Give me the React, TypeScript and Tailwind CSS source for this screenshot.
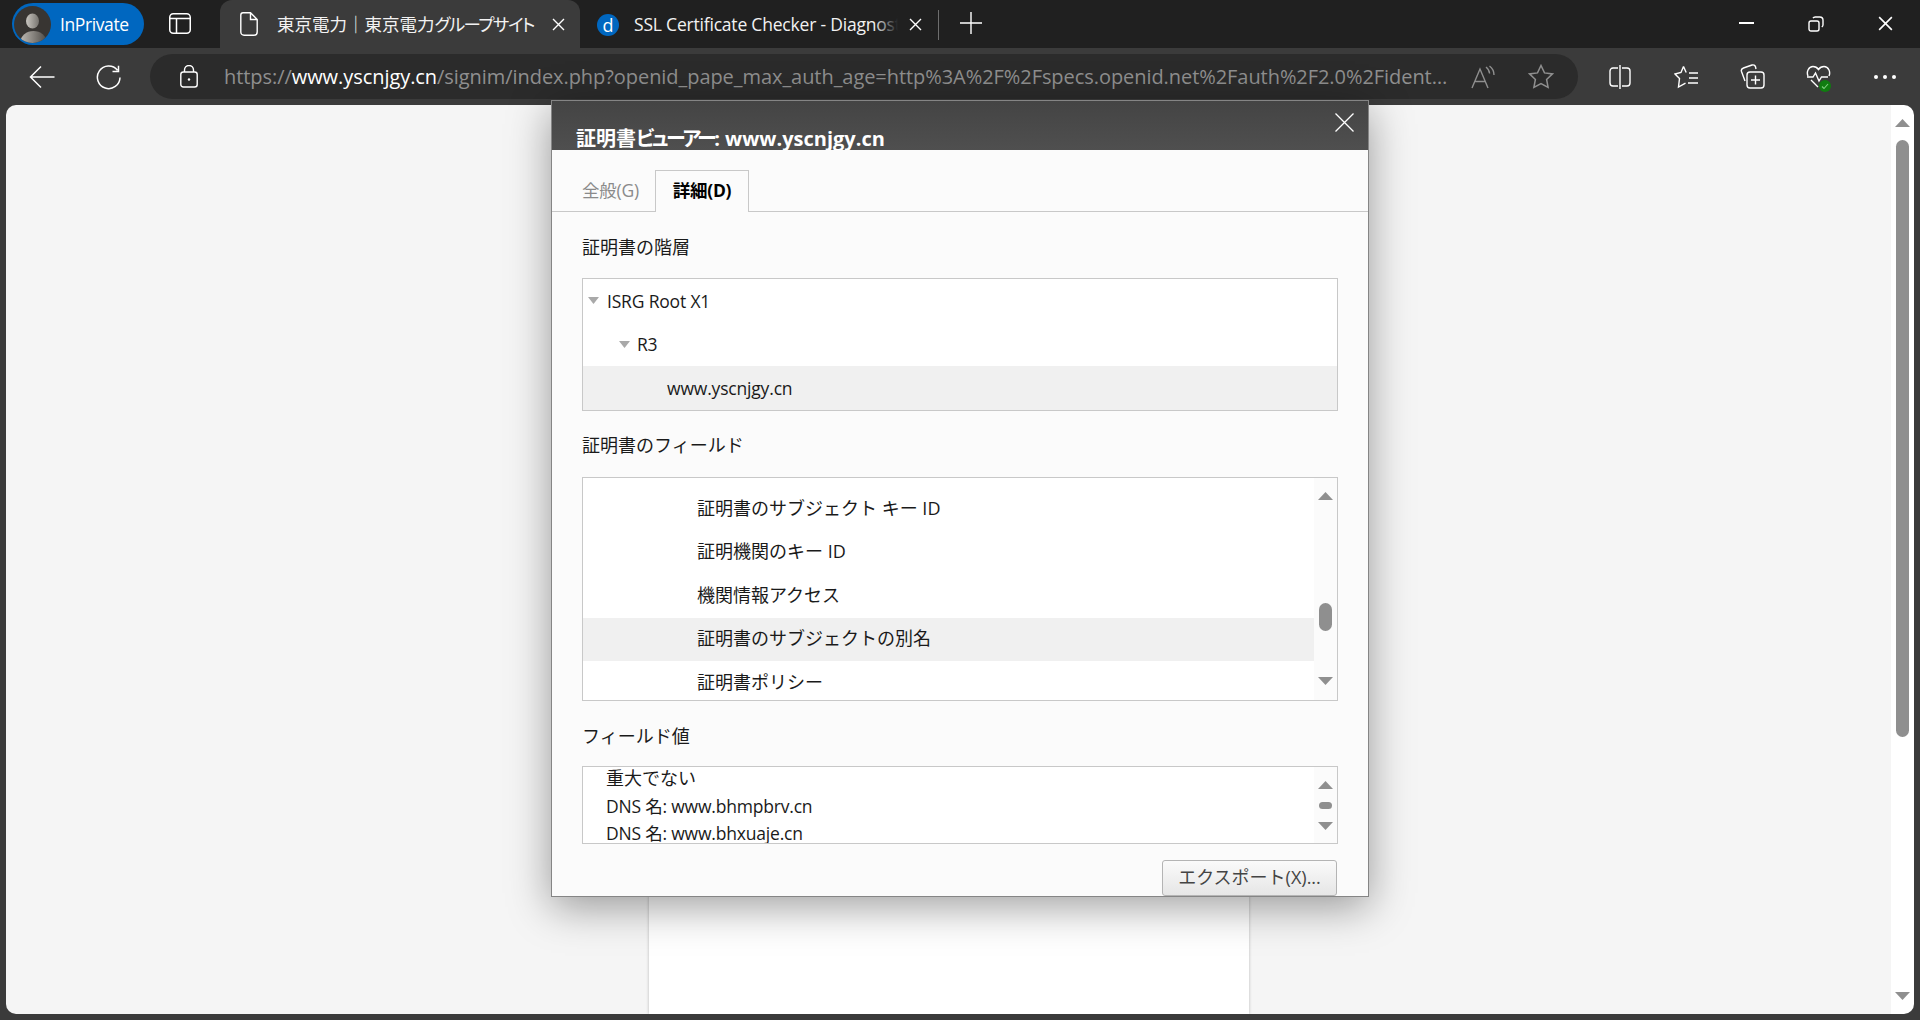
import React from "react";

const stroke = "currentColor";

function Tri({ down = false, className = "" }: { down?: boolean; className?: string }) {
  return (
    <svg width="15" height="8" viewBox="0 0 15 8" className={className}>
      <polygon points={down ? "0,0 15,0 7.5,8" : "0,8 15,8 7.5,0"} fill="#8f8f8f" />
    </svg>
  );
}

function TreeArrow() {
  return (
    <svg width="11" height="7" viewBox="0 0 11 7" className="shrink-0">
      <polygon points="0,0 11,0 5.5,7" fill="#a9a9a9" />
    </svg>
  );
}

function Avatar() {
  return (
    <svg width="37" height="37" viewBox="0 0 37 37" className="shrink-0">
      <defs>
        <linearGradient id="avh" x1="0" y1="0" x2="1" y2="0">
          <stop offset="0" stopColor="#c9c6c0" />
          <stop offset="1" stopColor="#77746f" />
        </linearGradient>
        <linearGradient id="avs" x1="0" y1="0" x2="1" y2="0">
          <stop offset="0" stopColor="#bdb9b2" />
          <stop offset="1" stopColor="#4f4c48" />
        </linearGradient>
        <clipPath id="avc">
          <circle cx="18.5" cy="18.5" r="18.5" />
        </clipPath>
      </defs>
      <g clipPath="url(#avc)">
        <rect width="37" height="37" fill="#383532" />
        <ellipse cx="18.500" cy="15" rx="6.500" ry="7.500" fill="url(#avh)" />
        <ellipse cx="19.500" cy="36" rx="13" ry="11" fill="url(#avs)" />
      </g>
    </svg>
  );
}

function SmallX({ size = 13 }: { size?: number }) {
  return (
    <svg width={size} height={size} viewBox="0 0 13 13" fill="none" stroke={stroke} strokeWidth="1.4">
      <path d="M1 1l11 11M12 1L1 12" />
    </svg>
  );
}

function Scrollbar({ children }: { children: React.ReactNode }) {
  return <div className="w-[23px] shrink-0 bg-[#fbfbfb] flex flex-col items-center">{children}</div>;
}

function TabBar() {
  return (
    <div className="h-[48px] bg-[#202020] flex text-white shrink-0">
      <div className="ml-[12px] mt-[3px] w-[132px] h-[42px] rounded-full bg-[#0067c0] flex items-center pl-[2px]">
        <Avatar />
        <span className="ml-[9px] text-[17.5px] font-['Open_Sans',sans-serif] tracking-[-0.4px]">InPrivate</span>
      </div>
      <div className="ml-[25px] mt-[13px] w-[22px] h-[21px] shrink-0">
        <svg width="22" height="21" viewBox="0 0 22 21" fill="none" stroke="#fff" strokeWidth="1.5">
          <rect x="0.75" y="0.75" width="20.5" height="19.5" rx="3.5" />
          <path d="M7.5 5v15.5M1 5.5h20" />
        </svg>
      </div>
      <div className="ml-[29px] w-[360px] h-[48px] bg-[#3b3b3b] rounded-t-[12px] flex items-center shrink-0">
        <svg width="18" height="24" viewBox="0 0 18 24" fill="none" stroke="#fff" strokeWidth="1.4" className="ml-[20px] shrink-0">
          <path d="M3 .8h7.5l6.7 6.7V20a3.2 3.2 0 0 1-3.2 3.2H4A3.2 3.2 0 0 1 .8 20V3A2.2 2.2 0 0 1 3 .8zM10.5 1v6.5h6.5" />
        </svg>
        <span className="ml-[19px] w-[244px] shrink-0 text-[17.5px] whitespace-nowrap font-['Noto_Sans_CJK_JP',sans-serif] [font-feature-settings:'palt'] text-[#f2f2f2]">
          東京電力｜東京電力<span className="tracking-[-1.5px]">グループサイト</span>
        </span>
        <span className="ml-[31px]"><SmallX /></span>
      </div>
      <div className="ml-[17px] mt-[14px] w-[22px] h-[22px] rounded-full bg-[#0067c0] flex items-center justify-center text-[18px] leading-[22px] font-['Open_Sans',sans-serif] shrink-0">
        d
      </div>
      <div className="ml-[15px] w-[264px] h-[48px] flex items-center overflow-hidden relative shrink-0">
        <span className="text-[17.5px] whitespace-nowrap text-[#f2f2f2] font-['Open_Sans',sans-serif] tracking-[-0.2px]">
          SSL Certificate Checker - Diagnostics
        </span>
        <div className="absolute right-0 top-0 h-full w-[24px] bg-gradient-to-r from-transparent to-[#202020]" />
      </div>
      <span className="ml-[11px] mt-[18px]"><SmallX /></span>
      <div className="ml-[16px] mt-[10px] w-px h-[30px] bg-[#6e6e6e]" />
      <svg width="22" height="22" viewBox="0 0 22 22" stroke="#fff" strokeWidth="1.4" className="ml-[21px] mt-[12px]">
        <path d="M11 0v22M0 11h22" />
      </svg>
      <div className="flex-1" />
      <svg width="15" height="2" viewBox="0 0 15 2" className="mt-[22px] mr-[54px]">
        <rect width="15" height="2" fill="#fff" />
      </svg>
      <svg width="16" height="16" viewBox="0 0 16 16" fill="none" stroke="#fff" strokeWidth="1.4" className="mt-[16px] mr-[54px]">
        <rect x="1" y="5" width="10" height="10" rx="2" />
        <path d="M5 2.2C5.5 1.3 6.3 1 7.2 1h4.6C13.6 1 15 2.4 15 4.2v4.6c0 .9-.4 1.7-1.2 2.2" />
      </svg>
      <span className="mt-[16px] mr-[27px]"><SmallX size={15} /></span>
    </div>
  );
}

function ToolBar() {
  return (
    <div className="h-[57px] bg-[#3b3b3b] flex items-start text-white shrink-0">
      <svg width="26" height="24" viewBox="0 0 26 24" fill="none" stroke="#fff" strokeWidth="1.5" className="ml-[29px] mt-[17px]">
        <path d="M1.5 12h24M12 1.5L1.5 12 12 22.5" />
      </svg>
      <svg width="26" height="25" viewBox="0 0 26 25" fill="none" stroke="#fff" strokeWidth="1.5" className="ml-[41px] mt-[17px]">
        <path d="M21.5 5.2A11.3 11.3 0 1 0 24 12.5M22.5 0.8v5.7h-6" />
      </svg>
      <div className="ml-[28px] mt-[6px] w-[1428px] h-[45px] rounded-full bg-[#2b2b2b] flex items-center">
        <svg width="18" height="23" viewBox="0 0 18 23" fill="none" stroke="#fff" strokeWidth="1.4" className="ml-[30px] shrink-0">
          <rect x="0.8" y="7" width="16.4" height="15" rx="2.5" />
          <path d="M4.5 7V5a4.5 4.5 0 0 1 9 0v2" />
          <circle cx="9" cy="14.5" r="1.2" fill="#fff" stroke="none" />
        </svg>
        <div className="ml-[26px] w-[1227px] shrink-0 text-[20px] whitespace-nowrap overflow-hidden font-['Open_Sans',sans-serif] tracking-[-0.06px] text-[#8f8f8f]">
          https://<span className="text-white">www.yscnjgy.cn</span>/signim/index.php?openid_pape_max_auth_age=http%3A%2F%2Fspecs.openid.net%2Fauth%2F2.0%2Fident…
        </div>
        <svg width="25" height="24" viewBox="0 0 25 24" fill="none" stroke="#8f8f8f" strokeWidth="1.4" className="ml-[20px] shrink-0">
          <path d="M1 23L9 4l8 19M3.800 16.500h10.400M15 2c2.200 1.800 3.400 3.800 3.600 6.500M18.500 1c3 2.200 4.500 5 4.500 9" />
        </svg>
        <svg width="26" height="25" viewBox="0 0 26 25" fill="none" stroke="#8f8f8f" strokeWidth="1.5" className="ml-[32px] shrink-0">
          <path d="M13 1.500l3.500 7.400 8 1-5.900 5.500 1.500 8L13 19.500l-7.100 3.900 1.500-8L1.500 9.900l8-1z" />
        </svg>
      </div>
      <svg width="22" height="24" viewBox="0 0 22 24" fill="none" stroke="#fff" strokeWidth="1.4" className="ml-[31px] mt-[17px]">
        <path d="M9 3H4a3 3 0 0 0-3 3v12a3 3 0 0 0 3 3h5M13 3h5a3 3 0 0 1 3 3v12a3 3 0 0 1-3 3h-5M11 0v24" />
      </svg>
      <svg width="25" height="24" viewBox="0 0 25 24" fill="none" stroke="#fff" strokeWidth="1.4" className="ml-[43px] mt-[17px]">
        <path d="M9.500 1.500L7 7.500 1 9l4.500 4.500L4.500 22l7-3.800M9.500 1.500L12.200 7.500M15 8h9M15 13h9M14 18h10" />
      </svg>
      <svg width="25" height="25" viewBox="0 0 25 25" fill="none" stroke="#fff" strokeWidth="1.4" className="ml-[41px] mt-[16px]">
        <path d="M5 17L1.500 7.500C1 6 2 4.500 3.500 4L12 1c1.500-.5 3 .3 3.500 1.800L16 5" />
        <rect x="7" y="8" width="17" height="16" rx="3" />
        <path d="M15.500 11.500v9M11 16h9" />
      </svg>
      <div className="ml-[41px] mt-[17px] w-[25px] h-[25px] relative">
        <svg width="25" height="24" viewBox="0 0 25 24" fill="none" stroke="#fff" strokeWidth="1.4">
          <path d="M2 11C.2 7 2.500 1.500 7 1.500c2.500 0 4.300 1.200 5.500 3 1.200-1.800 3-3 5.500-3 4.500 0 6.800 5.500 5 9.500M1 12h6l2.500-4 3.500 8 2.500-4H22M5 15l7 7" />
        </svg>
        <div className="absolute right-0 bottom-[-2px] w-[12px] h-[12px] rounded-full bg-[#107c10] flex items-center justify-center">
          <svg width="8" height="7" viewBox="0 0 8 7" fill="none" stroke="#7fcf7f" strokeWidth="1.1">
            <path d="M1 3.500l2 2L7 1" />
          </svg>
        </div>
      </div>
      <div className="ml-[43px] mt-[27px] flex gap-[5px]">
        <div className="w-[4px] h-[4px] rounded-full bg-white" />
        <div className="w-[4px] h-[4px] rounded-full bg-white" />
        <div className="w-[4px] h-[4px] rounded-full bg-white" />
      </div>
    </div>
  );
}

function Dialog() {
  return (
    <div className="absolute left-[551px] top-[100px] w-[818px] h-[797px] bg-[#fbfbfb] border border-[#858585] shadow-[0_10px_40px_rgba(0,0,0,0.38)] overflow-hidden flex flex-col font-['Open_Sans','Noto_Sans_CJK_JP',sans-serif] text-[18px]">
      <div className="h-[49px] shrink-0 bg-gradient-to-b from-[#444444] to-[#4f4f4f] relative overflow-hidden pl-[24px] pt-[27px]">
        <div className="text-[20px] font-bold text-white whitespace-nowrap leading-[22px] [font-feature-settings:'palt']">
          証明書<span className="tracking-[-2.5px]">ビューアー</span>: www.yscnjgy.cn
        </div>
        <svg width="19" height="19" viewBox="0 0 19 19" fill="none" stroke="#fff" strokeWidth="1.3" className="absolute right-[14px] top-[12px]">
          <path d="M.5.5l18 18M18.500.5l-18 18" />
        </svg>
      </div>
      <div className="h-[62px] shrink-0 border-b border-[#c8c8c8] flex items-end pl-[30px] text-[17.5px] tracking-[-0.25px]">
        <div className="h-[40px] w-[73px] text-[#8a8a8a] whitespace-nowrap leading-[38px]">全般(G)</div>
        <div className="h-[42px] w-[94px] -mb-px bg-[#fbfbfb] border-x border-t border-[#c8c8c8] font-bold text-black text-center leading-[38px] whitespace-nowrap">
          詳細(D)
        </div>
      </div>
      <div className="px-[30px] flex-1 flex flex-col text-[#1a1a1a]">
        <div className="mt-[23px] h-[24px] leading-[24px]">証明書の階層</div>
        <div className="mt-[19px] h-[133px] border border-[#c8c8c8] bg-white flex flex-col text-[17.5px] tracking-[-0.18px]">
          <div className="h-[43.500px] flex items-center pl-[5px] gap-[8px]">
            <TreeArrow />
            <span>ISRG Root X1</span>
          </div>
          <div className="h-[43.500px] flex items-center pl-[36px] gap-[7px]">
            <TreeArrow />
            <span>R3</span>
          </div>
          <div className="h-[44px] flex items-center pl-[84px] bg-[#f0f0f0]">www.yscnjgy.cn</div>
        </div>
        <div className="mt-[22px] h-[24px] leading-[24px]">証明書のフィールド</div>
        <div className="mt-[20px] h-[224px] border border-[#c8c8c8] bg-white flex overflow-hidden">
          <div className="flex-1 pt-[9px]">
            {["証明書のサブジェクト キー ID", "証明機関のキー ID", "機関情報アクセス", "証明書のサブジェクトの別名", "証明書ポリシー"].map((t, i) => (
              <div key={t} className={`h-[43.500px] flex items-center pl-[114px] pb-[1px] ${i === 3 ? "bg-[#f0f0f0]" : ""}`}>
                {t}
              </div>
            ))}
          </div>
          <Scrollbar>
            <Tri className="mt-[14px]" />
            <div className="mt-[103px] w-[13px] h-[28px] rounded-full bg-[#8f8f8f]" />
            <Tri down className="mt-[46px]" />
          </Scrollbar>
        </div>
        <div className="mt-[22px] h-[24px] leading-[24px] pt-[1px]">フィールド値</div>
        <div className="mt-[19px] h-[78px] border border-[#c8c8c8] bg-white flex overflow-hidden">
          <div className="flex-1 pl-[23px] -mt-[2px] leading-[27.500px] whitespace-nowrap h-[77px]">
            <div>重大でない</div>
            <div className="text-[17.5px] tracking-[-0.2px]">DNS 名: www.bhmpbrv.cn</div>
            <div className="h-[22px] text-[17.5px] tracking-[-0.2px]">DNS 名: www.bhxuaje.cn</div>
          </div>
          <Scrollbar>
            <Tri className="mt-[14px]" />
            <div className="mt-[13px] w-[13px] h-[7px] rounded-full bg-[#8f8f8f]" />
            <Tri down className="mt-[13px]" />
          </Scrollbar>
        </div>
        <div className="mt-[16px] flex justify-end pr-[1px]">
          <div className="w-[175px] h-[36px] rounded-[3px] border border-[#b4b4b4] bg-gradient-to-b from-[#fafafa] to-[#e6e6e6] text-[#444444] flex items-center justify-center whitespace-nowrap pb-[1px]">
            エクスポート(X)...
          </div>
        </div>
      </div>
    </div>
  );
}

export default function App() {
  return (
    <div className="w-[1920px] h-[1020px] bg-[#3b3b3b] flex flex-col relative overflow-hidden">
      <TabBar />
      <ToolBar />
      <div className="flex-1 px-[6px] pb-[6px] flex">
        <div className="flex-1 flex rounded-[10px] overflow-hidden">
          <div className="flex-1 bg-[#f5f5f5] flex justify-center">
            <div className="w-[600px] bg-white shadow-[0_0_3px_rgba(0,0,0,0.25)]" />
          </div>
          <div className="w-[23px] bg-white flex flex-col items-center">
            <Tri className="mt-[14px]" />
            <div className="mt-[13px] w-[13px] h-[597px] rounded-full bg-[#8f8f8f]" />
            <div className="flex-1" />
            <Tri down className="mb-[14px]" />
          </div>
        </div>
      </div>
      <Dialog />
    </div>
  );
}
